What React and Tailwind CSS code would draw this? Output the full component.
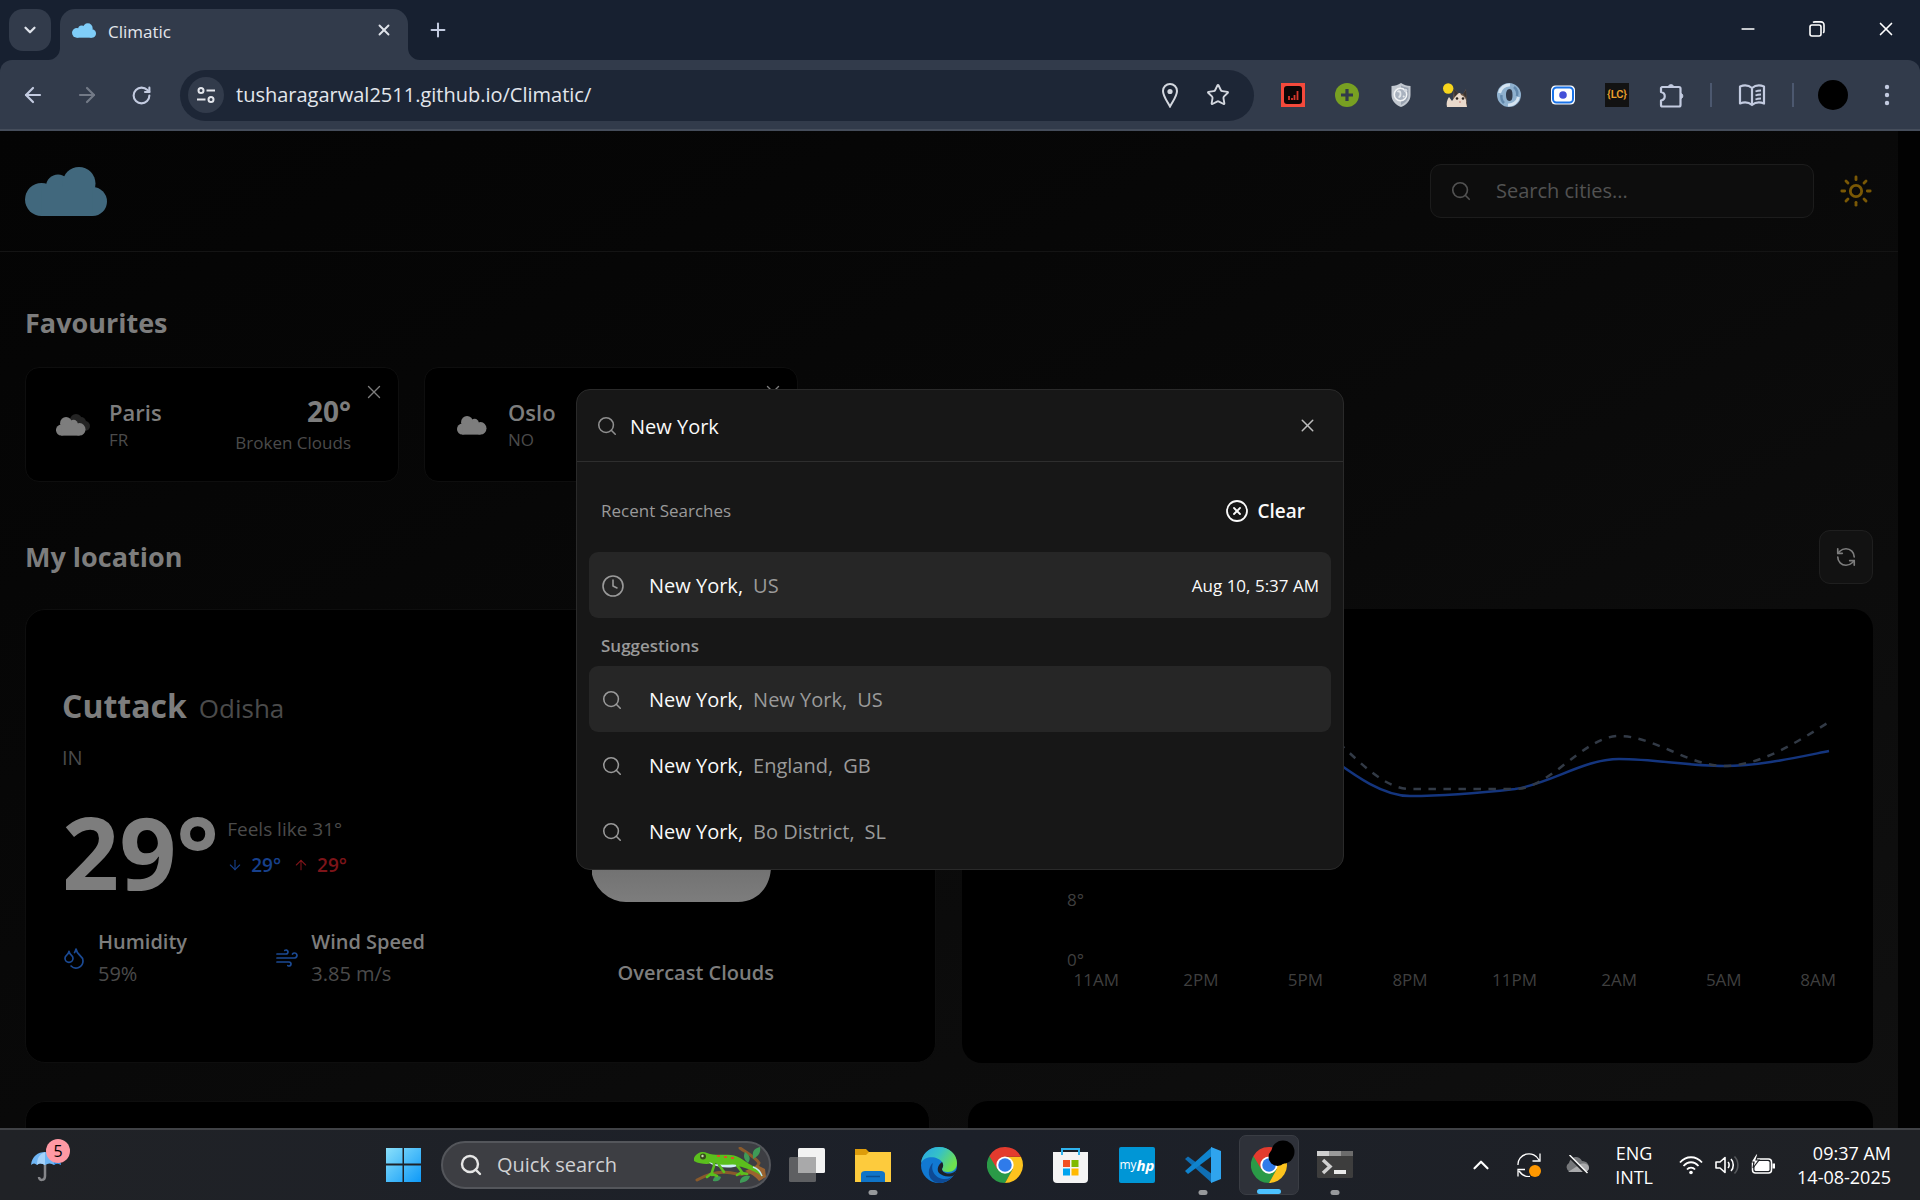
import React from "react";
import {
  ArrowDown,
  ArrowLeft,
  ArrowRight,
  ArrowUp,
  ChevronDown,
  ChevronUp,
  CircleX,
  Clock,
  Droplets,
  Minus,
  Plus,
  RefreshCcw,
  RotateCw,
  Search,
  Star,
  Sun,
  Wind,
  X,
} from "lucide-react";

/* ---------- shared drawings ---------- */

function CloudShape() {
  return (
    <>
      <circle cx="16.5" cy="32.5" r="16.5" />
      <circle cx="33" cy="19.5" r="12" />
      <circle cx="54" cy="16.5" r="16.5" />
      <circle cx="67.5" cy="34.5" r="14.5" />
      <rect x="16.5" y="20" width="51" height="29" />
    </>
  );
}

function CloudLogo({ className }) {
  return (
    <svg viewBox="0 0 82 49" fill="currentColor" className={className} aria-hidden="true">
      <CloudShape />
    </svg>
  );
}

function BrokenClouds() {
  return (
    <svg viewBox="0 0 34 24" className="h-6 w-[34px]" aria-hidden="true">
      <g fill="#242424">
        <circle cx="20" cy="7" r="6" />
        <circle cx="25" cy="9" r="5" />
        <circle cx="29" cy="13" r="5" />
      </g>
      <g fill="#7d7d7d" transform="translate(29.5 4) scale(-.36 .38)">
        <CloudShape />
      </g>
    </svg>
  );
}

function Overcast() {
  return (
    <svg viewBox="0 0 34 24" className="h-6 w-[34px]" aria-hidden="true">
      <g fill="#7d7d7d" transform="translate(31.5 3) scale(-.36 .38)">
        <CloudShape />
      </g>
    </svg>
  );
}

function ChromeMark({ className }) {
  return (
    <svg viewBox="0 0 48 48" className={className} aria-hidden="true">
      <path d="M24 24 34.4 30 24 48A24 24 0 0 1 3.2 12Z" fill="#2a9a47" />
      <path d="M24 13H45.3A24 24 0 0 1 24 48L34 30Z" fill="#fcc31e" />
      <path d="M24 13H45.3A24 24 0 0 0 3.2 12L14 30Z" fill="#e33b2e" />
      <circle cx="24" cy="24" r="11.5" fill="#fff" />
      <circle cx="24" cy="24" r="9" fill="#2f7bea" />
    </svg>
  );
}

/* ---------- browser chrome ---------- */

function TabStrip() {
  return (
    <div className="flex h-[60px] shrink-0 items-end bg-[#172030] pl-[9px]">
      <button aria-label="Search tabs" className="mb-[9px] grid h-[42px] w-[42px] place-items-center rounded-[14px] bg-[#323b4b] text-[#dfe3ea]">
        <ChevronDown size={18} strokeWidth={3} />
      </button>
      <div className="relative ml-[9px] flex h-[51px] w-[348px] items-center rounded-t-[15px] bg-[#323b4b] pr-3 pb-[9px] pl-3">
        <svg viewBox="0 0 12 12" className="absolute bottom-0 -left-3 h-3 w-3" aria-hidden="true">
          <path d="M12 0V12H0A12 12 0 0 0 12 0Z" fill="#323b4b" />
        </svg>
        <svg viewBox="0 0 12 12" className="absolute -right-3 bottom-0 h-3 w-3" aria-hidden="true">
          <path d="M0 0V12H12A12 12 0 0 1 0 0Z" fill="#323b4b" />
        </svg>
        <CloudLogo className="h-[15px] w-6 text-[#7fcdf8]" />
        <span className="ml-3 pt-[3px] text-[17px] leading-6 text-[#e3e6ec]">Climatic</span>
        <button aria-label="Close tab" className="ml-auto grid h-6 w-6 place-items-center text-[#dfe3ea]">
          <X size={18} strokeWidth={2.5} />
        </button>
      </div>
      <button aria-label="New tab" className="mb-[18px] ml-[18px] grid h-6 w-6 place-items-center text-[#c3cbe0]">
        <Plus size={22} strokeWidth={2.2} />
      </button>
      <div className="mb-[19px] ml-auto flex items-center text-white">
        <button aria-label="Minimize" className="grid h-6 w-[69px] place-items-center">
          <Minus size={20} strokeWidth={2} />
        </button>
        <button aria-label="Restore" className="grid h-6 w-[69px] place-items-center">
          <svg viewBox="0 0 16 16" className="h-4 w-4" fill="none" stroke="currentColor" strokeWidth="1.6" aria-hidden="true">
            <rect x="1" y="4" width="11" height="11" rx="2" />
            <path d="M4 1.500C4.500 1 5 .9 6 .9H12A3 3 0 0 1 15 4V10C15 11 14.800 11.500 14.200 12" />
          </svg>
        </button>
        <button aria-label="Close window" className="grid h-6 w-[69px] place-items-center">
          <X size={22} strokeWidth={1.8} />
        </button>
      </div>
    </div>
  );
}

function Extensions() {
  const slot = "grid h-9 w-[54px] place-items-center";
  return (
    <div className="flex items-center">
      <button aria-label="Chart extension" className={slot}>
        <svg viewBox="0 0 24 24" className="h-6 w-6">
          <rect width="24" height="24" fill="#f4493b" />
          <rect x="3" y="3" width="18" height="18" rx="3" fill="#0d0606" />
          <path d="M8 17v-4M11 17v-2M13.500 17v-5M16.500 17V8" stroke="#d8382c" strokeWidth="1.800" />
        </svg>
      </button>
      <button aria-label="Add extension" className={slot}>
        <svg viewBox="0 0 24 24" className="h-6 w-6">
          <circle cx="12" cy="12" r="12" fill="#78a022" />
          <path d="M12 6v12M6 12h12" stroke="#323b4b" strokeWidth="3.200" />
        </svg>
      </button>
      <button aria-label="Shield extension" className={slot}>
        <svg viewBox="0 0 24 24" className="h-6 w-6">
          <path d="M12 0C15 2 18 3 21.500 3V12C21.500 18 17 22 12 24 7 22 2.500 18 2.500 12V3C6 3 9 2 12 0Z" fill="#c2c8d0" />
          <path d="M12 2.500C15 4 17 4.500 19.500 4.800V12C19.500 17 16 20 12 22Z" fill="#99a2b0" />
          <circle cx="11.500" cy="11.500" r="6.200" fill="#a9b2bf" stroke="#f2f4f6" strokeWidth="1.500" />
          <path d="M8.500 9c2-2 3 0 3 2s-1 3-2 3M14 13l1.500 1" stroke="#e3e7eb" strokeWidth="1.800" fill="none" />
          <circle cx="16.500" cy="7.500" r="1.800" fill="#d5dae1" />
        </svg>
      </button>
      <button aria-label="Cat extension" className={slot}>
        <svg viewBox="0 0 24 24" className="h-6 w-6">
          <path d="M10 15 11 6 15 10 20 11 23 6 24 24H14Z" fill="#6f5a48" />
          <path d="M11 6 15 10 11.500 14ZM23 7 20 11 23.500 15Z" fill="#3a3330" />
          <path d="M12 14C15 11 17 8 18 12 21 13 24 16 23 20L24 24H4C3 20 4 17 6 14L9 18Z" fill="#e9d9cb" />
          <circle cx="14" cy="15.500" r="1.300" fill="#2b2320" />
          <circle cx="20" cy="15.500" r="1.300" fill="#2b2320" />
          <path d="M16 19h2" stroke="#c77f78" strokeWidth="1.200" />
          <circle cx="5.200" cy="5.500" r="5.200" fill="#f7d51c" />
        </svg>
      </button>
      <button aria-label="Ring extension" className={slot}>
        <svg viewBox="0 0 24 24" className="h-6 w-6" fill="none">
          <path fillRule="evenodd" d="M12 0A12 12 0 1 1 12 24 12 12 0 1 1 12 0ZM12.500 6C10 6 9 9 9 12S10 18 12.500 18 15.500 15 15.500 12 15 6 12.500 6Z" fill="#8fb1cf" />
          <path d="M2.500 10A10 10 0 0 1 13 2M21.500 14A10 10 0 0 1 11 22" stroke="#d5e4f1" strokeWidth="3" />
          <path d="M17 4A9 9 0 0 1 20 13M7 20A9 9 0 0 1 4.500 12" stroke="#6288ac" strokeWidth="2.500" />
        </svg>
      </button>
      <button aria-label="Recorder extension" className={slot}>
        <svg viewBox="0 0 24 24" className="h-6 w-6">
          <rect y="2.500" width="24" height="19" rx="4.500" fill="#fff" />
          <rect x="2" y="4.500" width="20" height="15" rx="3.500" fill="none" stroke="#1a73e8" strokeWidth="2" />
          <circle cx="12" cy="12" r="3.800" fill="#4450d8" />
        </svg>
      </button>
      <button aria-label="LC extension" className={slot}>
        <span className="grid h-6 w-6 place-items-center bg-[#121212] font-[Roboto] text-[11px] leading-3 font-semibold text-[#eba02c]">{"{LC}"}</span>
      </button>
      <button aria-label="Extensions" className={slot}>
        <svg viewBox="0 0 26 26" className="h-[26px] w-[26px]" fill="none" stroke="#c3cbe0" strokeWidth="2.200" strokeLinejoin="round">
          <path d="M4 5H21C22 5 22.500 5.500 22.500 6.500V23C22.500 24 22 24.500 21 24.500H4.500C3.500 24.500 3 24 3 23V18.500C8 17.500 8 11 3 10V6Z" />
          <path d="M10.500 4A3 3 0 0 1 15.500 4ZM23.500 11.500A3 3 0 0 1 23.500 16.500Z" fill="#c3cbe0" strokeWidth="1" />
        </svg>
      </button>
    </div>
  );
}

function Toolbar() {
  return (
    <div className="bg-[#172030]">
      <div className="flex h-[71px] items-center rounded-t-[12px] border-b-2 border-[#454d5b] bg-[#323b4b] pt-px pl-[19px] text-[#c3cbe0]">
        <button aria-label="Back" className="grid h-7 w-7 place-items-center">
          <ArrowLeft size={24} strokeWidth={2.2} />
        </button>
        <button aria-label="Forward" className="ml-[26px] grid h-7 w-7 place-items-center text-[#737a87]">
          <ArrowRight size={24} strokeWidth={2.2} />
        </button>
        <button aria-label="Reload" className="ml-[26px] grid h-7 w-7 place-items-center">
          <RotateCw size={21} strokeWidth={2.4} />
        </button>
        <div className="ml-[25px] flex h-[51px] flex-1 items-center rounded-full bg-[#1d2636] pr-[22px] pl-2">
          <button aria-label="Site information" className="grid h-9 w-9 place-items-center rounded-full bg-[#323b4b] text-[#e3e6ec]">
            <svg viewBox="0 0 18 18" className="h-[18px] w-[18px]" fill="none" stroke="currentColor" strokeWidth="2">
              <circle cx="4" cy="4.500" r="2.500" />
              <path d="M9.500 4.500H18M0 13.500H8.500" />
              <circle cx="14" cy="13.500" r="2.500" />
            </svg>
          </button>
          <input
            aria-label="Address"
            defaultValue="tusharagarwal2511.github.io/Climatic/"
            className="ml-3 min-w-0 flex-1 bg-transparent text-[20px] leading-7 text-[#e3e6ec] outline-none"
          />
          <button aria-label="Location permission" className="grid h-7 w-7 place-items-center text-[#d3d7df]">
            <svg viewBox="0 0 20 26" className="h-[26px] w-5" fill="none" stroke="currentColor" strokeWidth="2">
              <path d="M10 24.500C7 19 3 14 3 9A7 7 0 0 1 17 9C17 14 13 19 10 24.500Z" />
              <circle cx="10" cy="9.500" r="2.600" fill="currentColor" stroke="none" />
            </svg>
          </button>
          <button aria-label="Bookmark" className="ml-5 grid h-7 w-7 place-items-center text-[#d3d7df]">
            <Star size={24} strokeWidth={1.9} />
          </button>
        </div>
        <div className="ml-3">
          <Extensions />
        </div>
        <span className="ml-3 h-6 w-[2px] bg-[#4c586f]" />
        <button aria-label="Reading list" className="ml-6 grid h-8 w-8 place-items-center">
          <svg viewBox="0 0 28 24" className="h-6 w-7" fill="none" stroke="currentColor" strokeWidth="2.200" strokeLinejoin="round">
            <path d="M14 5C11 2.500 6 2 2 3.500V20.500C6 19 11 19.500 14 22 17 19.500 22 19 26 20.500V3.500C22 2 17 2.500 14 5ZM14 5V22" />
            <path d="M17.500 8.500C19.500 7.500 21 7.500 23 7.500M17.500 12.500C19.500 11.500 21 11.500 23 11.500M17.500 16.500C19.500 15.500 21 15.500 23 15.500" strokeWidth="1.800" />
          </svg>
        </button>
        <span className="ml-6 h-6 w-[2px] bg-[#4c586f]" />
        <button aria-label="Profile" className="ml-6 h-[30px] w-[30px] rounded-full bg-black" />
        <button aria-label="Menu" className="mr-[21px] ml-[27px] grid h-6 w-6 place-items-center">
          <svg viewBox="0 0 6 22" className="h-[22px] w-1.5" fill="currentColor">
            <circle cx="3" cy="3" r="2.200" />
            <circle cx="3" cy="11" r="2.200" />
            <circle cx="3" cy="19" r="2.200" />
          </svg>
        </button>
      </div>
    </div>
  );
}

/* ---------- weather page ---------- */

function PageHeader() {
  return (
    <header className="flex h-[121px] shrink-0 items-center justify-between border-b border-[#141414] px-[25px]">
      <a href="#home" aria-label="Climatic home">
        <CloudLogo className="h-[49px] w-[82px] text-[#41687d]" />
      </a>
      <div className="flex items-center gap-[25px]">
        <button className="flex h-[54px] w-[384px] items-center rounded-[11px] border border-[#1c1c1c] bg-[#0d0d0d] pl-[19px] text-[20px] font-medium text-[#525252]">
          <Search size={22} strokeWidth={1.8} />
          <span className="ml-6">Search cities...</span>
        </button>
        <button aria-label="Toggle theme" className="text-[#7a5805]">
          <Sun size={34} strokeWidth={2} />
        </button>
      </div>
    </header>
  );
}

function FavouriteCard({ icon, city, country, temp, condition }) {
  return (
    <article className="relative flex h-[115px] w-[374px] items-center rounded-[14px] border border-[#0e0e0e] bg-black pr-[47px] pl-[30px]">
      {icon}
      <div className="ml-[19px]">
        <p className="text-[22px] leading-[30px] font-semibold text-[#7d7d7d]">{city}</p>
        <p className="text-[17px] leading-[26px] text-[#4b4b4b]">{country}</p>
      </div>
      {temp && (
        <div className="ml-auto text-right">
          <p className="text-[28px] leading-8 font-bold text-[#7d7d7d]">{temp}</p>
          <p className="mt-1 text-[17px] leading-6 text-[#4b4b4b]">{condition}</p>
        </div>
      )}
      <button aria-label={`Remove ${city}`} className="absolute top-3 right-3 grid h-6 w-6 place-items-center text-[#7d7d7d]">
        <X size={22} strokeWidth={1.5} />
      </button>
    </article>
  );
}

function Metric({ icon, label, value }) {
  return (
    <div className="flex items-center gap-3">
      {icon}
      <div>
        <p className="text-[20px] leading-8 font-semibold text-[#7d7d7d]">{label}</p>
        <p className="text-[20px] leading-8 text-[#4b4b4b]">{value}</p>
      </div>
    </div>
  );
}

function CurrentWeather() {
  return (
    <section className="grid h-[454px] grid-cols-2 gap-6 rounded-[20px] border border-[#0e0e0e] bg-black px-9">
      <div className="flex flex-col justify-center pt-1">
        <div className="flex items-baseline gap-3">
          <h3 className="text-[32px] leading-10 font-bold text-[#7d7d7d]">Cuttack</h3>
          <span className="text-[26px] leading-10 text-[#4b4b4b]">Odisha</span>
        </div>
        <p className="mt-4 text-[20px] leading-7 text-[#4b4b4b]">IN</p>
        <div className="mt-6 flex items-center gap-2">
          <p className="text-[100px] leading-[110px] font-bold text-[#7d7d7d]">29°</p>
          <div className="-mt-2">
            <p className="text-[19px] leading-9 font-medium text-[#4b4b4b]">Feels like 31°</p>
            <div className="flex items-center text-[19px] leading-9 font-semibold">
              <ArrowDown size={16} strokeWidth={1.6} className="text-[#17408c]" />
              <span className="ml-2 text-[#17408c]">29°</span>
              <ArrowUp size={16} strokeWidth={1.6} className="ml-3 text-[#7d1419]" />
              <span className="ml-2 text-[#7d1419]">29°</span>
            </div>
          </div>
        </div>
        <div className="mt-5 grid grid-cols-2 gap-5">
          <Metric icon={<Droplets size={24} strokeWidth={1.7} className="text-[#1b4a94]" />} label="Humidity" value="59%" />
          <Metric icon={<Wind size={24} strokeWidth={1.7} className="text-[#1b4a94]" />} label="Wind Speed" value="3.85 m/s" />
        </div>
      </div>
      <div className="flex flex-col items-center justify-end pb-[75px]">
        <svg viewBox="0 0 207 108" className="h-[108px] w-[207px]" aria-hidden="true">
          <defs>
            <linearGradient id="overcast" x1="0" y1="0" x2="0" y2="1">
              <stop offset="0" stopColor="#5c5c5c" />
              <stop offset="1" stopColor="#7d7d7d" />
            </linearGradient>
          </defs>
          <path d="M36 108A36 36 0 0 1 34 36C40 10 70 0 95 10 120 14 130 30 134 44 165 40 179 54 179 72 179 92 166 108 146 108Z" fill="url(#overcast)" />
        </svg>
        <p className="mt-[57px] text-[20px] leading-7 font-semibold text-[#7d7d7d]">Overcast Clouds</p>
      </div>
    </section>
  );
}

function HourlyChart() {
  const hours = ["11AM", "2PM", "5PM", "8PM", "11PM", "2AM", "5AM"];
  return (
    <section className="flex h-[454px] flex-col justify-end rounded-[20px] bg-black pr-[37px] pb-[75px] pl-[82px] text-[17px] text-[#3f3f3f]">
      <div className="flex items-end">
        <div className="flex h-20 w-10 flex-col justify-between pb-1 text-right leading-4">
          <span>8°</span>
          <span>0°</span>
        </div>
        <svg viewBox="0 0 752 272" preserveAspectRatio="none" className="h-[272px] min-w-0 flex-1" fill="none" strokeWidth="2.500" role="img" aria-label="Temperature over the next 24 hours">
          <path d="M12 30C47 20 81 15 116 15 151 15 186 17 221 40 256 63 291 96 326 96 361 96 396 93 431 89 466 84 500 59 535 59 570 59 605 66 640 66 675 66 710 58 745 51" stroke="#14357e" />
          <path d="M12 5C47 0 81 0 116 0 151 0 186 0 221 15 256 37 291 89 326 89 361 89 396 89 431 89 466 89 500 36 535 36 570 36 605 66 640 66 675 66 710 44 745 22" stroke="#323a46" strokeDasharray="7.500 7.500" />
        </svg>
      </div>
      <div className="flex leading-4">
        {hours.map((h) => (
          <span key={h} className="flex-1 text-center">{h}</span>
        ))}
        <span className="w-[60px] text-right">8AM</span>
      </div>
    </section>
  );
}

/* ---------- search dialog ---------- */

function ResultRow({ icon, city, parts, time, active }) {
  return (
    <button className={`flex h-[66px] w-full items-center rounded-[9px] px-3 pt-0.5 text-left text-[20px] leading-7 ${active ? "bg-[#262626]" : ""}`}>
      <span className="w-12 text-[#9a9a9a]">{icon}</span>
      <span className="font-medium text-[#fafafa]">{city},</span>
      {parts.map((p) => (
        <span key={p} className="ml-2.5 text-[#9a9a9a]">{p}</span>
      ))}
      {time && <span className="ml-auto text-[17px] font-medium text-[#fafafa]">{time}</span>}
    </button>
  );
}

function SearchDialog() {
  const loupe = <Search size={22} strokeWidth={1.7} />;
  return (
    <div role="dialog" aria-label="Search cities" className="w-[768px] rounded-[14px] border border-[#2a2a2a] bg-[#171717]">
      <div className="flex h-[72px] items-center border-b border-[#2e2e2e] px-[19px]">
        <Search size={22} strokeWidth={1.7} className="text-[#8f8f8f]" />
        <input aria-label="City" defaultValue="New York" className="ml-3 min-w-0 flex-1 bg-transparent pt-0.5 text-[20px] leading-7 font-medium text-[#fafafa] outline-none" />
        <button aria-label="Close" className="mr-[5px] grid h-6 w-6 place-items-center text-[#bdbdbd]">
          <X size={21} strokeWidth={1.7} />
        </button>
      </div>
      <div className="px-3 pb-[5px]">
        <div className="flex h-[90px] items-center justify-between pt-2 pr-[26px] pl-3">
          <span className="text-[17px] leading-6 text-[#9a9a9a]">Recent Searches</span>
          <button className="flex items-center gap-2 text-[19px] leading-7 font-semibold text-[#fafafa]">
            <CircleX size={24} strokeWidth={1.8} />
            Clear
          </button>
        </div>
        <ResultRow active icon={<Clock size={24} strokeWidth={1.6} />} city="New York" parts={["US"]} time="Aug 10, 5:37 AM" />
        <p className="flex h-12 items-center pt-2 pl-3 text-[17px] leading-6 font-semibold text-[#9a9a9a]">Suggestions</p>
        <ResultRow active icon={loupe} city="New York" parts={["New York,", "US"]} />
        <ResultRow icon={loupe} city="New York" parts={["England,", "GB"]} />
        <ResultRow icon={loupe} city="New York" parts={["Bo District,", "SL"]} />
      </div>
    </div>
  );
}

function WeatherPage() {
  return (
    <div className="relative flex min-h-0 flex-1 overflow-hidden bg-[#020202]">
      <div className="flex min-w-0 flex-1 flex-col overflow-hidden bg-linear-to-br from-[#040404] to-[#101010]">
        <PageHeader />
        <main className="shrink-0 px-[25px] pt-[53px]">
          <h2 className="text-[27px] leading-9 font-bold text-[#7d7d7d]">Favourites</h2>
          <div className="mt-[26px] flex gap-[25px]">
            <FavouriteCard icon={<BrokenClouds />} city="Paris" country="FR" temp="20°" condition="Broken Clouds" />
            <FavouriteCard icon={<Overcast />} city="Oslo" country="NO" />
          </div>
          <div className="mt-12 flex items-center justify-between">
            <h2 className="text-[27px] leading-9 font-bold text-[#7d7d7d]">My location</h2>
            <button aria-label="Refresh" className="grid h-[54px] w-[54px] place-items-center rounded-[11px] border border-[#1f1f1f] bg-[#121212] text-[#7d7d7d]">
              <RefreshCcw size={22} strokeWidth={1.8} />
            </button>
          </div>
          <div className="mt-[25px] grid grid-cols-2 gap-[26px]">
            <CurrentWeather />
            <HourlyChart />
          </div>
          <div className="mt-[38px] grid grid-cols-2 gap-[38px]">
            <section className="h-60 rounded-[20px] border border-[#0e0e0e] bg-black" />
            <section className="h-60 rounded-[20px] bg-black" />
          </div>
        </main>
      </div>
      <div className="w-[22px]" />
      <div className="absolute inset-0 flex items-center justify-center">
        <SearchDialog />
      </div>
    </div>
  );
}

/* ---------- taskbar ---------- */

function Tile({ label, running, active, children }) {
  return (
    <div className="flex h-full w-[66px] items-center justify-center">
      <button
        aria-label={label}
        className={`relative grid h-[60px] w-[60px] place-items-center rounded-[7px] ${active ? "border border-[#3a3d44] bg-[#2e3139]" : ""}`}
      >
        {children}
        {running && <span className="absolute bottom-0 left-1/2 h-[5px] w-[9px] -translate-x-1/2 rounded-full bg-[#97999c]" />}
        {active && <span className="absolute bottom-0 left-1/2 h-[5px] w-6 -translate-x-1/2 rounded-full bg-[#4cc2ff]" />}
      </button>
    </div>
  );
}

function Gecko() {
  return (
    <svg viewBox="0 0 74 36" className="h-9 w-[74px]" aria-hidden="true">
      <path d="M4 33C16 26 30 23 44 27 56 28 62 25 66 16 62 10 54 6 47 1" stroke="#8a5a2b" strokeWidth="3" fill="none" strokeLinecap="round" />
      <path d="M52 24 64 18 72 22 73 30 66 34C62 29 58 27 52 24Z" fill="#9a6330" />
      <path d="M60 9C59 4 62 1 67 0 68 5 66 9 60 12ZM52 5C50 9 51 13 55 16 58 12 57 8 52 5ZM47 34C48 29 53 28 57 29 56 33 53 35 47 36ZM20 33C21 29 25 28 28 30 27 34 24 35 20 34Z" fill="#3f9b57" />
      <path d="M1 11C4 5 10 4 14 6 22 9 30 7 38 8 47 9 52 15 58 18 63 20 67 24 70 30 64 25 58 23 52 21 42 17 30 21 22 16 17 17 8 18 1 14Z" fill="#5bbf1d" />
      <path d="M16 15C26 20 38 16 46 18 40 22 26 21 18 17Z" fill="#cfeef7" />
      <path d="M21 16C22 21 18 23 19 28M19 26 14 30M19 27 24 29M44 17C44 21 49 22 49 27M49 25 44 28M49 26 54 27M26 18 31 25" stroke="#5bbf1d" strokeWidth="2.600" fill="none" strokeLinecap="round" />
      <path d="M60 20C66 22 68 26 69 29" stroke="#bfe9f2" strokeWidth="1.500" fill="none" />
      <path d="M24 9h3M31 10h3M38 11h3" stroke="#d8542c" strokeWidth="2" />
      <circle cx="10" cy="9.500" r="3" fill="#3a4a1e" />
      <circle cx="9.500" cy="9" r="1.200" fill="#c9d7b0" />
    </svg>
  );
}

function Taskbar() {
  return (
    <footer className="flex h-[72px] shrink-0 items-center border-t-2 border-[#404246] bg-linear-to-r from-[#202226] via-[#1c2029] to-[#1f2125] pb-px text-white">
      <div className="flex h-full w-[370px] items-center pl-[31px]">
        <button aria-label="Weather widget" className="relative h-10 w-10">
          <svg viewBox="0 0 36 36" className="h-9 w-9" aria-hidden="true">
            <path d="M14 14V29C14 34 8 34 8 30" stroke="#85868a" strokeWidth="2.500" fill="none" />
            <path d="M0 18C1 9 7 5 14 5S28 9 30 18C27 16 25 16 23 18 20 16 17 16 14 18 11 16 8 16 6 18 4 16 2 16 0 18Z" fill="#6fb6f5" />
            <path d="M14 5C20 6 23 12 23 18 25 16 27 16 30 18 28 9 22 5 14 5Z" fill="#2f8ee6" />
            <path d="M14 5C8 7 6 12 6 18 8 16 11 16 14 18Z" fill="#a5d2fa" />
          </svg>
          <span className="absolute -top-1.5 left-[15px] grid h-6 w-6 place-items-center rounded-full bg-[#ff99a4] text-[16px] leading-6 text-black">5</span>
        </button>
      </div>
      <Tile label="Start">
        <svg viewBox="0 0 35 35" className="h-[35px] w-[35px]" aria-hidden="true">
          <defs>
            <linearGradient id="win" x1="0" y1="0" x2="1" y2="1">
              <stop offset="0" stopColor="#8ae0fb" />
              <stop offset="1" stopColor="#0d99f8" />
            </linearGradient>
          </defs>
          <path d="M0 1H16.500V16.500H0ZM18 1H35V16.500H18ZM0 18.500H16.500V35H0ZM18 18.500H35V35H18Z" fill="url(#win)" />
        </svg>
      </Tile>
      <button className="mr-[3px] ml-[5px] flex h-12 w-[330px] items-center rounded-full border-2 border-[#54565b] bg-[#3d3e43] pr-0.5 pl-4 text-[20px] text-[#d0d1d3]">
        <Search size={24} strokeWidth={2.4} className="text-[#e6e6e6]" />
        <span className="ml-3.5">Quick search</span>
        <span className="ml-auto">
          <Gecko />
        </span>
      </button>
      <Tile label="Task view">
        <svg viewBox="0 0 36 36" className="h-9 w-9" aria-hidden="true">
          <rect x="9" y="1" width="27" height="25" rx="1.500" fill="#f2f2f2" />
          <rect x="0" y="10" width="27" height="25" rx="1.500" fill="#5e5f62" />
          <rect x="9" y="10" width="18" height="16" fill="#a9a9aa" />
        </svg>
      </Tile>
      <Tile label="File Explorer" running>
        <svg viewBox="0 0 36 36" className="h-9 w-9" aria-hidden="true">
          <path d="M0 2H11L15 6V12H0Z" fill="#dd9c0b" />
          <path d="M0 8H11L14 5H36V35H0Z" fill="#fdcb3d" />
          <path d="M6 35V27C6 25 8 24 10 24H26C28 24 30 25 30 27V35Z" fill="#0f74c8" />
          <path d="M11 29.500H25" stroke="#0a4e90" strokeWidth="1.500" />
        </svg>
      </Tile>
      <Tile label="Edge">
        <svg viewBox="0 0 36 36" className="h-9 w-9" aria-hidden="true">
          <defs>
            <linearGradient id="edgeTop" x1="0" y1="0" x2="1" y2=".5">
              <stop offset="0" stopColor="#2aa5e6" />
              <stop offset=".5" stopColor="#35c1c8" />
              <stop offset="1" stopColor="#6fe04e" />
            </linearGradient>
          </defs>
          <circle cx="18" cy="18" r="18" fill="#1179d2" />
          <path d="M0 16C1 7 8 0 18 0 28 0 36 7 36 16 36 22 32 25 27 25 23 25 21 24 21 22 22 20 23 18 21 15 18 10 5 7 0 16Z" fill="url(#edgeTop)" />
          <path d="M12 16C9 24 15 32 24 32 28 32 31 30 33 27 29 34 23 36 18 36 10 35 7 29 8 23 9 20 10 17 12 16Z" fill="#0d4a95" />
          <path d="M21 22C21 25 25 27 29 26.500 32 26 34 25 36 22L33.500 28C28 31 21 29 18 26 15 22 18 17 21 15 23 18 22 20 21 22Z" fill="#1d2129" />
        </svg>
      </Tile>
      <Tile label="Chrome">
        <ChromeMark className="h-9 w-9" />
      </Tile>
      <Tile label="Microsoft Store">
        <svg viewBox="0 0 36 36" className="h-9 w-9" aria-hidden="true">
          <path d="M0 5H35V32Q35 36 31 36H4Q0 36 0 32Z" fill="#f4f4f4" />
          <path d="M9 8V2H26V8" fill="none" stroke="#2fb3ee" strokeWidth="2" />
          <path d="M10 13H17V20H10Z" fill="#f25022" />
          <path d="M18.500 13H25.500V20H18.500Z" fill="#7fba00" />
          <path d="M10 21.500H17V28.500H10Z" fill="#00a4ef" />
          <path d="M18.500 21.500H25.500V28.500H18.500Z" fill="#ffb900" />
        </svg>
      </Tile>
      <Tile label="myHP">
        <span className="flex h-9 w-9 items-center justify-center rounded-[2px] bg-[#0096d6] text-[12px] leading-4">
          my<span className="text-[15px] font-bold italic">hp</span>
        </span>
      </Tile>
      <Tile label="Visual Studio Code" running>
        <svg viewBox="0 0 36 36" className="h-9 w-9" aria-hidden="true">
          <path d="M0 12 3 9.500 27 27V36Z" fill="#0f6fb5" />
          <path d="M0 24 3 27 27 9V0Z" fill="#0f83cd" />
          <path d="M26 0 36 4V32L26 36Z" fill="#2fa4ee" />
        </svg>
      </Tile>
      <Tile label="Chrome, Climatic" active>
        <ChromeMark className="h-9 w-9" />
        <svg viewBox="0 0 27 27" className="absolute top-1 right-[3px] h-[27px] w-[27px]" fill="#000" aria-hidden="true">
          <circle cx="15" cy="12" r="11.500" />
          <circle cx="9.500" cy="17" r="9" />
        </svg>
      </Tile>
      <Tile label="Terminal" running>
        <svg viewBox="0 0 36 36" className="h-9 w-9" aria-hidden="true">
          <rect y="4" width="36" height="27" rx="1.500" fill="#3d3d3d" />
          <path d="M0 4H12V9H0Z" fill="#cfcfcf" />
          <path d="M12 4H24V9H12Z" fill="#9a9a9a" />
          <path d="M24 4H36V9H24Z" fill="#6c6c6c" />
          <path d="M6 13 13 19.500 6 26" stroke="#d0d0d0" strokeWidth="3.500" fill="none" />
          <rect x="17" y="23" width="12" height="4" fill="#e8e8e8" />
        </svg>
      </Tile>
      <div className="ml-auto flex items-center pr-[29px] text-[18px] leading-6">
        <button aria-label="Show hidden icons" className="grid h-8 w-12 place-items-center">
          <ChevronUp size={26} strokeWidth={2} />
        </button>
        <button aria-label="Updates" className="grid h-8 w-12 place-items-center">
          <svg viewBox="0 0 24 24" className="h-6 w-6" fill="none" stroke="#fff" strokeWidth="1.300" aria-hidden="true">
            <path d="M1 12A11 10.500 0 0 1 22 7M23 .5V8H15.500M1 23.500V16.500H8M2 18C5 22 9 24 13 23.500" />
            <circle cx="18" cy="18" r="6" fill="#ff9800" stroke="none" />
          </svg>
        </button>
        <button aria-label="OneDrive" className="grid h-8 w-12 place-items-center">
          <svg viewBox="0 0 24 20" className="h-5 w-6" aria-hidden="true">
            <path d="M5 17A5 5 0 0 1 4 8C6 1 14 0 17 6 22 6 24 10 24 12 24 15 22 17 19 17Z" fill="#75777a" />
            <path d="M3 17 14 10C18 7 24 9 24 13 24 15 22 17 19 17Z" fill="#a9aaac" />
            <path d="M4 1 22 19" stroke="#1f2125" strokeWidth="3" />
            <path d="M4.500 0 22.500 18" stroke="#fff" strokeWidth="1.500" />
          </svg>
        </button>
        <button className="ml-2 w-[50px] text-center">
          ENG
          <br />
          INTL
        </button>
        <button aria-label="Network, volume, battery" className="ml-5 flex items-center gap-3">
          <svg viewBox="0 0 24 20" className="h-5 w-6" fill="none" stroke="#fff" strokeWidth="1.800" aria-hidden="true">
            <path d="M1 7.500C7 .5 17 .5 23 7.500M4.500 11C9 6 15 6 19.500 11M8 14.500C10 12 14 12 16 14.500" />
            <circle cx="12" cy="17.500" r="1.800" fill="#fff" stroke="none" />
          </svg>
          <svg viewBox="0 0 24 20" className="h-5 w-6" fill="none" stroke="#fff" strokeWidth="1.600" strokeLinejoin="round" aria-hidden="true">
            <path d="M1 7H5L10 2.500V17.500L5 13H1Z" />
            <path d="M13 7C14.500 8.500 14.500 11.500 13 13M16 4C19 7 19 13 16 16" />
            <path d="M19.500 1.500C24 6 24 14 19.500 18.500" stroke="#55575b" />
          </svg>
          <svg viewBox="0 0 24 20" className="h-5 w-6 overflow-visible" aria-hidden="true">
            <rect x="1.500" y="4" width="19" height="14" rx="3" fill="none" stroke="#fff" strokeWidth="1.500" />
            <rect x="3.500" y="6" width="15" height="10" rx="1.500" fill="#fff" />
            <rect x="21.500" y="8.500" width="2.500" height="5" fill="#fff" />
            <path d="M5-1 0 7H3L2 13 8 5H5L7-1Z" fill="#fff" stroke="#1f2125" strokeWidth="1.200" />
          </svg>
        </button>
        <button className="ml-[22px] text-right">
          09:37 AM
          <br />
          14-08-2025
        </button>
      </div>
    </footer>
  );
}

export default function App() {
  return (
    <div className="flex h-screen flex-col overflow-hidden font-['Open_Sans','Noto_Sans',sans-serif]">
      <TabStrip />
      <Toolbar />
      <WeatherPage />
      <Taskbar />
    </div>
  );
}
